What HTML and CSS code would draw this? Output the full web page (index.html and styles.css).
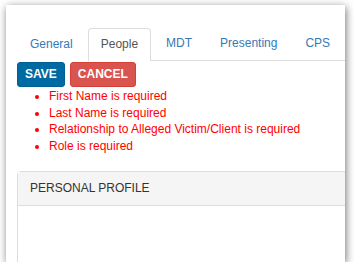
FILE: index.html
```html
<!DOCTYPE html>
<html lang="en">
<head>
    <meta charset="UTF-8">
    <title>People</title>
    <link rel="stylesheet" href="styles.css">
</head>
<body>
    <div class="window">
        <div class="nav-tabs">
            <a class="tab">General</a>
            <a class="tab active">People</a>
            <div class="tab-rest">
                <a class="tab">MDT</a>
                <a class="tab">Presenting</a>
                <a class="tab">CPS</a>
            </div>
        </div>
        <div class="actions">
            <button class="btn btn-save">SAVE</button>
            <button class="btn btn-cancel">CANCEL</button>
        </div>
        <ul class="errors">
            <li>First Name is required</li>
            <li>Last Name is required</li>
            <li>Relationship to Alleged Victim/Client is required</li>
            <li>Role is required</li>
        </ul>
        <div class="panel">
            <div class="panel-heading">PERSONAL PROFILE</div>
            <div class="panel-body"></div>
        </div>
    </div>
</body>
</html>
```

FILE: styles.css
```css
body {
    margin: 0;
    background: #fff;
    font-family: "Liberation Sans", Arial, sans-serif;
    font-size: 12px;
    line-height: 17px;
}
.window {
    margin: 5px 0 0 6px;
    width: 339px;
    height: 257px;
    background: #fff;
    box-shadow: 1px 2px 8px rgba(0, 0, 0, 0.55);
    overflow: hidden;
    padding: 22px 0 0 11px;
    box-sizing: border-box;
}
.nav-tabs {
    display: flex;
    align-items: flex-end;
}
.tab {
    display: block;
    padding: 7px 12px 8px;
    margin-right: 2px;
    border: 1px solid transparent;
    border-bottom: none;
    border-radius: 4px 4px 0 0;
    color: #337ab7;
    white-space: nowrap;
}
.tab.active {
    color: #555;
    border-color: #ddd;
    background: #fff;
}
.tab-rest {
    display: flex;
    flex: 1;
    margin-left: -2px;
    padding-left: 2px;
    border-bottom: 1px solid #ddd;
}
.actions {
    display: flex;
    gap: 5px;
    margin-top: 1px;
}
.btn {
    font-family: "Liberation Sans", Arial, sans-serif;
    font-size: 12px;
    font-weight: bold;
    line-height: 17px;
    color: #fff;
    border: 1px solid transparent;
    border-radius: 3px;
    padding: 3px 7px;
}
.btn-save {
    background: #006aa3;
    border-color: #005e90;
}
.btn-cancel {
    background: #d9534f;
    border-color: #d43f3a;
}
.errors {
    margin: 1px 0 0;
    padding-left: 32px;
    color: #ff0000;
    line-height: 16.67px;
}
.panel {
    margin-top: 16px;
    width: 360px;
    border: 1px solid #ddd;
    border-radius: 4px 0 0 0;
}
.panel-heading {
    background: #f5f5f5;
    color: #333;
    padding: 8px 12px;
    border-bottom: 1px solid #ddd;
}
.panel-body {
    height: 100px;
}
```
